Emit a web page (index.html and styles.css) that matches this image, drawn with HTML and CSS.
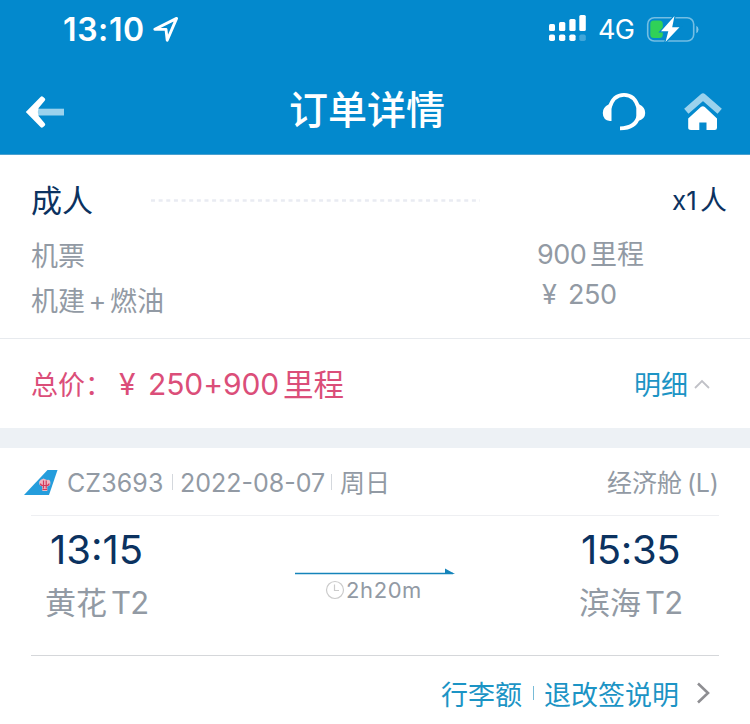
FILE: index.html
```html
<!DOCTYPE html>
<html lang="zh-CN">
<head>
<meta charset="utf-8">
<title>订单详情</title>
<link rel="stylesheet" href="styles.css">
</head>
<body>
<header class="header">
  <div class="status">
    <span class="clock">13:10</span>
    <svg class="locate" width="28" height="28" viewBox="0 0 28 28"><path d="M2.8 14.2 24.6 3.4 15.2 25.2 14 14.4Z" fill="none" stroke="#fff" stroke-width="2.900" stroke-linejoin="round"/></svg>
    <svg class="signal" width="40" height="30" viewBox="0 0 40 30" fill="#fff"><rect x="1" y="10" width="6" height="7" rx="1.5"/><rect x="11" y="8" width="6.3" height="9" rx="1.5"/><rect x="21.300" y="5" width="6.300" height="12" rx="1.500"/><rect x="31.300" y="1" width="6.500" height="16" rx="1.500"/><rect x="1" y="20.500" width="6" height="6.500" rx="1.800"/><rect x="11" y="20.500" width="6.300" height="6.500" rx="1.800"/><rect x="21.300" y="20.500" width="6.300" height="6.500" rx="1.800"/><rect x="31.300" y="20.500" width="6.500" height="6.500" rx="1.800" opacity=".25"/></svg>
    <span class="network">4G</span>
    <svg class="battery" width="54" height="30" viewBox="0 0 54 30"><rect x="1.700" y="3.700" width="46" height="23.300" rx="6.500" fill="none" stroke="#fff" stroke-opacity=".45" stroke-width="1.600"/><path d="M50.300 11.700q2.200 1 2.200 3.800t-2.200 3.800z" fill="#fff" opacity=".5"/><rect x="4.300" y="6.500" width="12.500" height="17.500" rx="3.500" fill="#30d158"/><path d="M28.500 2 15 17.300h7.300L19.500 28 33.500 13.200h-7.300z" fill="#fff" stroke="#0389cd" stroke-width="2.400" paint-order="stroke"/></svg>
  </div>
  <nav class="nav">
    <svg class="back" width="42" height="34" viewBox="0 0 42 34"><path d="M12 13.700h27v6.800H12z" fill="#9bd2ed"/><path d="M.8 17 15.500 1.900q1.300-1.300 2.700 0l1.500 1.400q1.200 1.300 0 2.500L13.600 13q-1.600 4 0 8l6.100 7.200q1.200 1.200 0 2.500l-1.500 1.400q-1.400 1.300-2.700 0Z" fill="#fff"/></svg>
    <h1 class="title">订单详情</h1>
    <svg class="headset" width="44" height="40" viewBox="0 0 44 40"><g fill="none" stroke="#fff" stroke-width="3.800"><path d="M7.500 16C10 7 15 2.900 22 2.900S34 7 36.500 16v8C35 31 30 36.300 18 36.300"/></g><path d="M9.500 12.500V29H8Q.8 28 .8 21 .8 15 6.500 12.500ZM34.500 12.500V29H36q7.200-2 7.200-8 0-6-5.700-8.500Z" fill="#fff"/></svg>
    <svg class="home" width="40" height="40" viewBox="0 0 40 40"><path d="m3.300 19.200L20 4.800l16.700 14.400" fill="none" stroke="#9bd2ed" stroke-width="6.600" stroke-linejoin="round"/><path d="M17.800 14.900q2-1.500 4 0L34 26.500v9.300q0 2.200-2.200 2.200H23.500v-7.500h-7.200V38H8q-2.800 0-2.800-2.200v-9.300Z" fill="#fff"/></svg>
  </nav>
</header>

<main>
  <section class="fare">
    <div class="row passenger"><span class="adult">成人</span><svg class="dots" width="329" height="3"><path d="M0 1.500h329" stroke="#e9ebf2" stroke-width="2.600" stroke-dasharray="4 3.640"/></svg><span class="count"><span class="num">x1</span>人</span></div>
    <div class="fees">
      <div class="fee-names"><div class="ticket">机票</div><div class="tax">机建<span class="plus">+</span>燃油</div></div>
      <div class="fee-values"><div class="miles"><span class="num">900</span>里程</div><div class="yuan"><span class="sign">¥</span><span class="num">250</span></div></div>
    </div>
    <div class="rule"></div>
    <div class="row total">
      <span class="total-label">总价：</span><span class="total-sign">¥</span><span class="total-num">250+900</span><span class="total-unit">里程</span>
      <span class="detail">明细</span><svg class="caret" width="18" height="10" viewBox="0 0 18 10"><path d="m2 9 7-7 7 7" fill="none" stroke="#c0c1c7" stroke-width="1.800"/></svg>
    </div>
  </section>

  <section class="flight">
    <div class="row info">
      <svg class="tail" width="36" height="27" viewBox="0 0 36 27"><path d="M1 26 24.500 1H34.500L26 26Z" fill="#259ddc"/><path d="M20.500 9.500 24 11q4-1 3.300 4.500-1 2-3 2v4.500h-5v-4.500q-4-1-3-5 1-2 4.200-3Z" fill="#edb9c4"/><path d="M17.500 14.500q0 2 2.500 2h3.500q2.500 0 2.500-2M20.500 11.500v8M23.200 11.500v8M19.500 20.500h4.600" fill="none" stroke="#d23a5c" stroke-width="1.200"/></svg>
      <span class="flight-no">CZ3693</span><i class="sep"></i><span class="date">2022-08-07</span><i class="sep"></i><span class="weekday">周日</span>
      <span class="cabin">经济舱<span class="class">(L)</span></span>
    </div>
    <div class="route">
      <div class="stop depart"><div class="time">13:15</div><div class="airport">黄花<span class="terminal">T2</span></div></div>
      <div class="duration">
        <svg class="arrow" width="160" height="8" viewBox="0 0 160 8"><path d="M0 5.500h158" stroke="#1584ba" stroke-width="1.400"/><path d="m150 .5 10 5.500h-10z" fill="#1584ba"/></svg>
        <div class="length"><svg width="20" height="20" viewBox="0 0 20 20" fill="none" stroke="#cbcbcb" stroke-width="1.200"><circle cx="10" cy="10" r="8.500"/><path d="M9.500 4.500v6H14"/></svg><span>2h20m</span></div>
      </div>
      <div class="stop arrive"><div class="time">15:35</div><div class="airport">滨海<span class="terminal">T2</span></div></div>
    </div>
    <div class="links"><span>行李额</span><i class="link-sep"></i><span>退改签说明</span><svg class="more" width="16" height="24" viewBox="0 0 16 24"><path d="m2 2.500 10 9.500L2 21.500" fill="none" stroke="#8e8e92" stroke-width="2.600"/></svg></div>
  </section>
</main>
</body>
</html>
```

FILE: styles.css
```css
* { box-sizing: border-box; }
body { margin: 0; width: 750px; height: 724px; overflow: hidden; background: #fff; color: #929aa4; font-family: Inter, "Noto Sans CJK SC", sans-serif; white-space: nowrap; }
svg { display: block; flex: none; }
span { flex: none; }
.header { height: 155px; background: #0389cd; color: #fff; border-bottom: 1px solid #4aa0cf; }
.status { display: flex; align-items: center; height: 58px; padding-left: 63px; }
.clock { width: 89px; font-size: 32px; font-weight: 600; letter-spacing: .6px; }
.signal { margin-left: 368px; }
.network { width: 46px; margin-left: 10px; font-size: 27px; letter-spacing: -.6px; }
.battery { margin-left: 2px; }
.nav { display: flex; align-items: center; height: 108px; padding-left: 25px; }
.title { margin: 0 0 0 222px; width: 313px; padding-bottom: 4px; font-size: 39px; line-height: 56px; font-weight: 500; }
.home { margin-left: 37px; }
.fare { height: 273px; padding-top: 19px; }
.row { display: flex; align-items: center; }
.passenger { height: 52px; padding-left: 31px; color: #0b3260; }
.adult { width: 120px; padding-bottom: 4px; font-size: 31px; }
.dots { margin-right: 192px; }
.count { padding-bottom: 3px; font-size: 27px; }
.count .num { display: inline-block; width: 28px; font-size: 26px; }
.fees { display: flex; height: 112px; font-size: 27px; padding-left: 31px; }
.fee-names { width: 506px; padding-top: 8px; line-height: 45px; }
.plus { display: inline-block; width: 25px; text-align: center; }
.fee-values { line-height: 40px; padding-top: 9px; }
.miles .num { display: inline-block; width: 53px; letter-spacing: -.5px; }
.yuan { padding-left: 5px; }
.sign { display: inline-block; width: 26px; }
.yuan .num { letter-spacing: -.5px; }
.rule { height: 1px; background: #e7eaee; }
.total { height: 89px; padding-left: 31px; color: #db4e79; }
.total-label { width: 88px; font-size: 27px; }
.total-sign { width: 29px; font-size: 30px; }
.total-num { width: 135px; font-size: 30px; letter-spacing: -.1px; }
.total-unit { width: 351px; padding-bottom: 2px; font-size: 30.500px; }
.detail { width: 59px; color: #1c94c5; font-size: 27px; }
.flight { border-top: 20px solid #edf1f5; }
.info { position: relative; height: 68px; padding-left: 23px; font-size: 25px; }
.info::after { content: ""; position: absolute; left: 31px; right: 31px; bottom: 0; height: 1px; background: #eeeff2; }
.flight-no { width: 105px; margin-left: 8px; padding-top: 1px; letter-spacing: .1px; }
.sep { width: 1px; height: 16px; background: #d4d8dd; }
.date { width: 158px; padding: 1px 0 0 7px; }
.weekday { width: 275px; padding-left: 8px; }
.weekday, .cabin { padding-bottom: 2px; }
.class { display: inline-block; padding-left: 5px; letter-spacing: -.3px; }
.route { display: flex; height: 140px; margin: 0 31px; border-bottom: 1px solid #d5d7da; }
.depart { width: 264px; padding-left: 14px; }
.time { height: 67px; line-height: 67px; padding-left: 5px; font-size: 40px; color: #0b3260; }
.airport { height: 40px; line-height: 40px; font-size: 31px; }
.terminal { display: inline-block; padding-left: 4px; letter-spacing: -.7px; }
.duration { width: 284px; padding-top: 52px; }
.length { display: flex; align-items: center; height: 28px; padding-left: 30px; font-size: 22px; letter-spacing: .6px; }
.length span { padding-left: 1px; }
.arrive .time { padding-left: 2px; letter-spacing: -.4px; }
.links { display: flex; align-items: center; height: 74px; padding-left: 441px; color: #1c94c5; font-size: 27px; }
.link-sep { width: 1px; height: 14px; margin: 0 10px 0 11px; background: #78bbd7; }
.more { margin-left: 17px; }
```
